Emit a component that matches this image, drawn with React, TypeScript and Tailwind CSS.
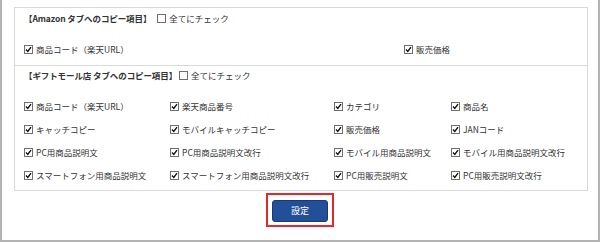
import React from "react";

const font = { fontFamily: '"Noto Sans CJK JP", "Noto Sans", sans-serif' };

function Box({ checked }: { checked: boolean }) {
  return (
    <span className="inline-flex h-[9px] w-[9px] shrink-0 items-center justify-center border border-[#6f6f6f] bg-white">
      {checked && (
        <svg width="7" height="7" viewBox="0 0 7 7">
          <path d="M1 3.6 L2.8 5.4 L6 1.2" fill="none" stroke="#111" strokeWidth="1.4" />
        </svg>
      )}
    </span>
  );
}

function Item({ label, checked = true }: { label: string; checked?: boolean }) {
  return (
    <div className="flex h-[12px] items-center gap-[3px] whitespace-nowrap">
      <Box checked={checked} />
      <span className="leading-[12px]">{label}</span>
    </div>
  );
}

function Header({ title, gap }: { title: string; gap: string }) {
  return (
    <div className="flex h-[12px] items-center whitespace-nowrap">
      <span className="font-semibold leading-[12px] tracking-[-0.1px]">{title}</span>
      <div className={gap}>
        <Item label="全てにチェック" checked={false} />
      </div>
    </div>
  );
}

const gift = [
  "商品コード（楽天URL）",
  "楽天商品番号",
  "カテゴリ",
  "商品名",
  "キャッチコピー",
  "モバイルキャッチコピー",
  "販売価格",
  "JANコード",
  "PC用商品説明文",
  "PC用商品説明文改行",
  "モバイル用商品説明文",
  "モバイル用商品説明文改行",
  "スマートフォン用商品説明文",
  "スマートフォン用商品説明文改行",
  "PC用販売説明文",
  "PC用販売説明文改行",
];

export default function App() {
  return (
    <div
      className="h-[242px] w-[600px] overflow-hidden border-x-2 border-b-2 border-[#b3b3b3] bg-white text-[8.5px] text-[#333]"
      style={font}
    >
      <div className="ml-[12px] mr-[10px] mt-[7px] border border-b-0 border-[#d9d9d9]">
        <div className="border-b border-[#d9d9d9] pb-[10px] pl-[9px] pt-[4px]">
          <Header title="【Amazon タブへのコピー項目】" gap="ml-[6px]" />
          <div className="mt-[19px] grid grid-cols-[380px_auto]">
            <Item label="商品コード（楽天URL）" />
            <Item label="販売価格" />
          </div>
        </div>
        <div className="border-b border-[#d9d9d9] pb-[9px] pl-[9px] pt-[3px]">
          <Header title="【ギフトモール店 タブへのコピー項目】" gap="ml-[2px]" />
          <div className="mt-[19px] grid grid-cols-[146px_164px_117px_auto] gap-y-[11px]">
            {gift.map((g) => (
              <Item key={g} label={g} />
            ))}
          </div>
        </div>
      </div>
      <div className="mt-[2px] flex justify-center">
        <div className="border-2 border-[#e8262b] px-[4px] pb-[3px] pt-[5px]">
          <button className="flex h-[22px] w-[56px] items-center justify-center rounded-[3px] border border-[#163a75] bg-[#224f98] text-[9px] text-white">
            設定
          </button>
        </div>
      </div>
    </div>
  );
}
